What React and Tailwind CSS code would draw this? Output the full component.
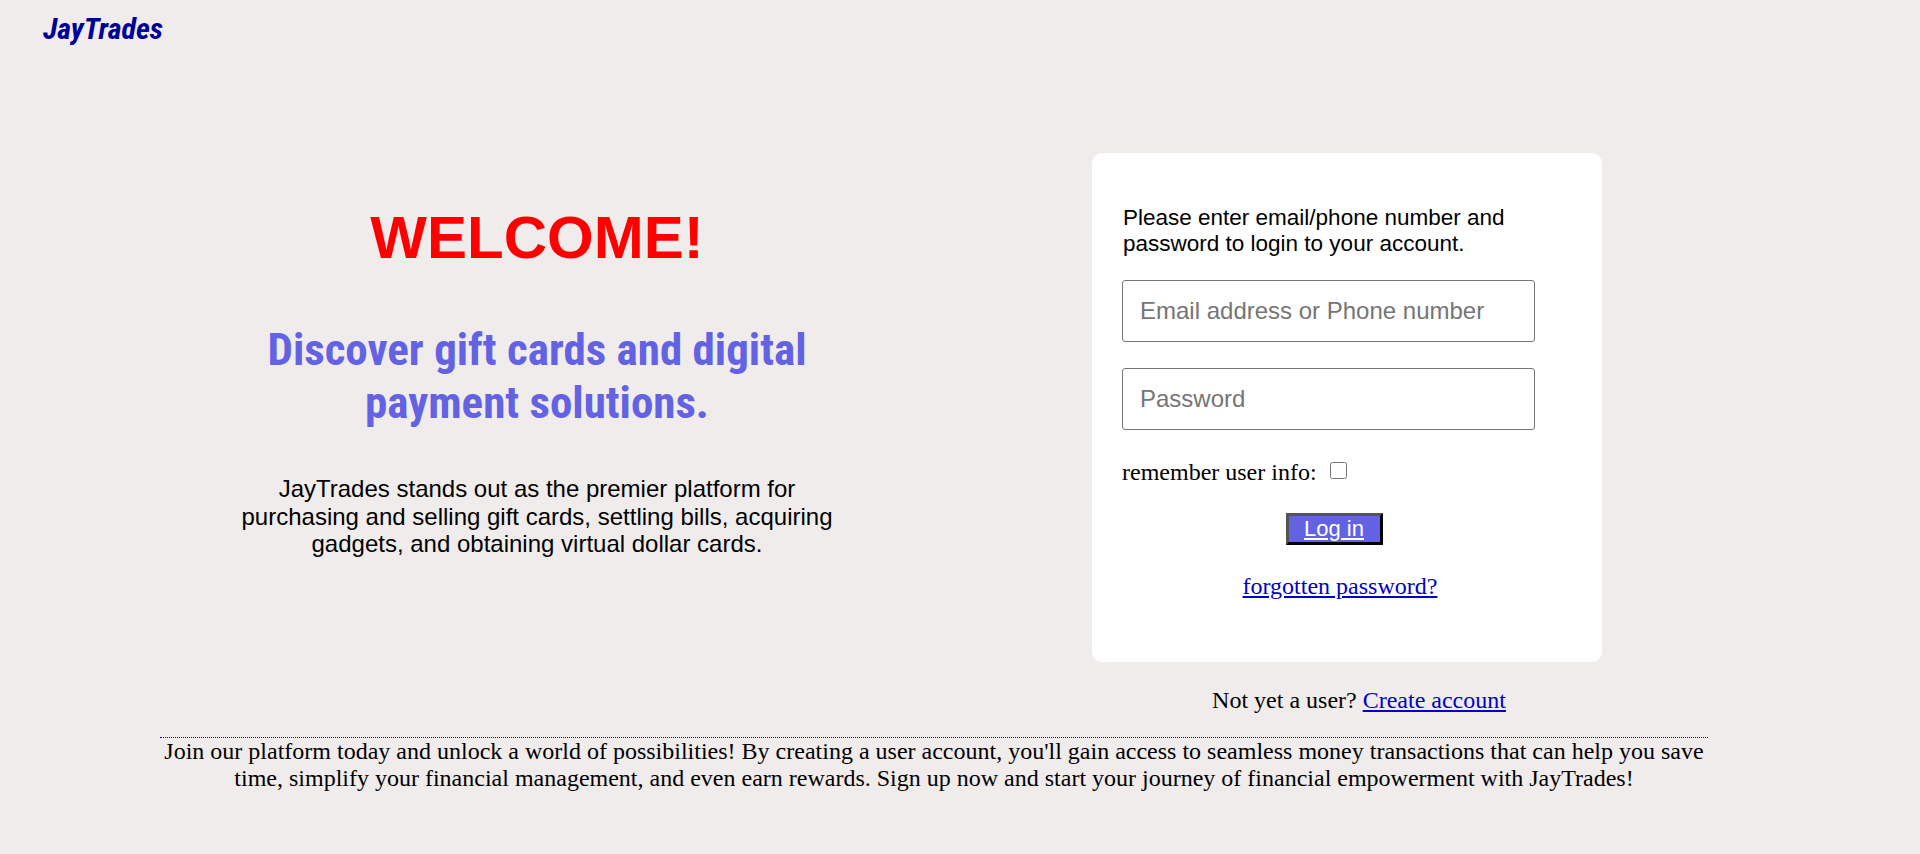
import React, { useState } from "react";

const App = () => {
    const [login, setLogin] = useState("");
    const [password, setPassword] = useState("");
    const [remember, setRemember] = useState(false);

    return (
        <div className="min-h-screen bg-[#f0ecec] text-black font-['Liberation_Serif',serif]">
            {/* top bar / logo */}
            <div className="pl-[43px] pt-[11px] font-['Roboto_Condensed',Roboto,sans-serif] [font-stretch:75%] font-bold italic text-[30px] leading-[35px] text-[#000099]">
                JayTrades
            </div>

            <main className="mt-[107px] flex items-start">
                {/* LEFT: welcome text */}
                <section className="ml-[217px] w-[640px] mt-[50px] text-center">
                    <h1 className="font-['Liberation_Sans',Arial,sans-serif] font-bold text-[60px] leading-[69px] text-[#ff0000]">
                        WELCOME!
                    </h1>
                    <h2 className="mt-[51px] px-[40px] font-['Roboto_Condensed',Roboto,sans-serif] [font-stretch:75%] font-bold text-[45px] leading-[53px] text-[#6262e3]">
                        Discover gift cards and digital payment solutions.
                    </h2>
                    <p className="mt-[46px] font-['Liberation_Sans',Arial,sans-serif] text-[24px] leading-[27.6px]">
                        JayTrades stands out as the premier platform for
                        purchasing and selling gift cards, settling bills,
                        acquiring gadgets, and obtaining virtual dollar cards.
                    </p>
                </section>

                {/* RIGHT: login card */}
                <section className="ml-[235px] w-[510px]">
                    <form
                        className="bg-white rounded-[10px] pt-[52px] pb-[62px] pl-[30px] pr-[50px]"
                        onSubmit={(e) => e.preventDefault()}
                    >
                        <p className="pl-px font-['Liberation_Sans',Arial,sans-serif] text-[22.5px] leading-[26px]">
                            Please enter email/phone number and password to
                            login to your account.
                        </p>

                        <input
                            type="text"
                            placeholder="Email address or Phone number"
                            value={login}
                            onChange={(e) => setLogin(e.target.value)}
                            className="block mt-[23px] w-[413px] h-[62px] px-[17px] bg-white border border-[#767676] rounded-[3px] font-['Liberation_Sans',Arial,sans-serif] text-[24px] placeholder:text-[#757575] outline-none"
                        />
                        <input
                            type="password"
                            placeholder="Password"
                            value={password}
                            onChange={(e) => setPassword(e.target.value)}
                            className="block mt-[26px] w-[413px] h-[62px] px-[17px] bg-white border border-[#767676] rounded-[3px] font-['Liberation_Sans',Arial,sans-serif] text-[24px] placeholder:text-[#757575] outline-none"
                        />

                        {/* remember me */}
                        <label className="mt-[28px] flex items-center text-[24px] leading-[28px]">
                            remember user info:
                            <input
                                type="checkbox"
                                checked={remember}
                                onChange={(e) => setRemember(e.target.checked)}
                                className="ml-[13px] w-[17px] h-[17px] -mt-[3px]"
                            />
                        </label>

                        <div className="flex flex-col items-center">
                            <button
                                type="submit"
                                className="mt-[27px] mr-[6px] w-[97px] h-[32px] bg-[#6262e3] border-[3px] border-black [border-style:outset] font-['Liberation_Sans',Arial,sans-serif] text-[22px] leading-[26px] text-white"
                            >
                                <span className="underline">Log in</span>
                            </button>
                            <a
                                href="#"
                                className="mt-[27px] ml-[6px] text-[24px] leading-[28px] text-[#0000c8] underline"
                            >
                                forgotten password?
                            </a>
                        </div>
                    </form>

                    <p className="mt-[24px] pl-[24px] text-center text-[24px] leading-[28px]">
                        Not yet a user?{" "}
                        <a href="#" className="text-[#0000c8] underline">
                            Create account
                        </a>
                    </p>
                </section>
            </main>

            {/* footer blurb */}
            <p className="mt-[23px] ml-[160px] w-[1548px] border-t border-dotted border-[#0000ff] text-center text-[24px] leading-[27px]">
                Join our platform today and unlock a world of possibilities! By
                creating a user account, you'll gain access to seamless money
                transactions that can help you save time, simplify your
                financial management, and even earn rewards. Sign up now and
                start your journey of financial empowerment with JayTrades!
            </p>
        </div>
    );
};

export default App;
